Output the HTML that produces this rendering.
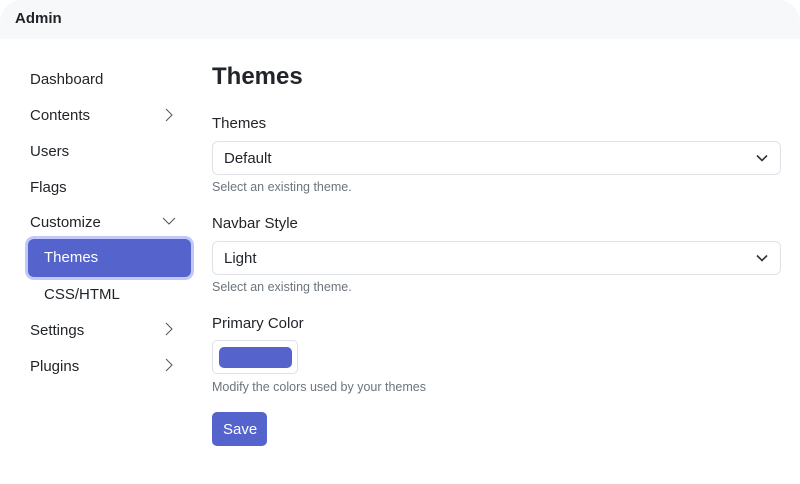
<!DOCTYPE html>
<html><head><style>
*{box-sizing:border-box;margin:0;padding:0}
body{width:800px;height:484px;background:#fff;font-family:"Liberation Sans",sans-serif;color:#212529;position:relative;overflow:hidden}
.hdr{position:absolute;left:0;top:0;width:800px;height:39px;background:#f7f8fa;border-radius:22px 22px 0 0}
.hdr span{position:absolute;left:15px;top:10px;font-weight:bold;font-size:15px}
.nav{position:absolute;left:30px;font-size:15px}
.chev{position:absolute;left:162px}
.act{position:absolute;left:28px;top:239px;width:163px;height:38px;background:#5464cc;border-radius:6px;box-shadow:0 0 0 3px #c2c8fa;color:#fff;font-size:15px;padding:10px 0 0 16px}
.abs{position:absolute}
.lbl{position:absolute;left:212px;font-size:15px}
.sel{position:absolute;left:212px;width:569px;height:34px;border:1px solid #dee2e6;border-radius:6px;font-size:15px;padding:8px 0 0 11px}
.sel svg{position:absolute;right:12px;top:12px}
.help{position:absolute;left:212px;font-size:12.5px;color:#6c757d}
</style></head><body>
<div class="hdr"><span>Admin</span></div>
<div class="nav" style="top:71px">Dashboard</div>
<div class="nav" style="top:107px">Contents</div>
<svg class="chev abs" style="top:108px" width="12" height="14" viewBox="0 0 12 14"><path d="M4 1l6 6-6 6" fill="none" stroke="#555" stroke-width="1"/></svg>
<div class="nav" style="top:143px">Users</div>
<div class="nav" style="top:179px">Flags</div>
<div class="nav" style="top:214px">Customize</div>
<svg class="chev abs" style="top:216px" width="14" height="10" viewBox="0 0 14 10"><path d="M1 2l6 6 6-6" fill="none" stroke="#555" stroke-width="1"/></svg>
<div class="act">Themes</div>
<div class="nav" style="top:286px;left:44px">CSS/HTML</div>
<div class="nav" style="top:322px">Settings</div>
<svg class="chev abs" style="top:322px" width="12" height="14" viewBox="0 0 12 14"><path d="M4 1l6 6-6 6" fill="none" stroke="#555" stroke-width="1"/></svg>
<div class="nav" style="top:358px">Plugins</div>
<svg class="chev abs" style="top:358px" width="12" height="14" viewBox="0 0 12 14"><path d="M4 1l6 6-6 6" fill="none" stroke="#555" stroke-width="1"/></svg>

<div class="abs" style="left:212px;top:63px;font-size:24px;font-weight:bold">Themes</div>
<div class="lbl" style="top:115px">Themes</div>
<div class="sel" style="top:141px">Default<svg width="12" height="8" viewBox="0 0 12 8"><path d="M1 1.5l5 5 5-5" fill="none" stroke="#333" stroke-width="1.6"/></svg></div>
<div class="help" style="top:180px">Select an existing theme.</div>
<div class="lbl" style="top:215px">Navbar Style</div>
<div class="sel" style="top:241px">Light<svg width="12" height="8" viewBox="0 0 12 8"><path d="M1 1.5l5 5 5-5" fill="none" stroke="#333" stroke-width="1.6"/></svg></div>
<div class="help" style="top:280px">Select an existing theme.</div>
<div class="lbl" style="top:315px">Primary Color</div>
<div class="abs" style="left:212px;top:340px;width:86px;height:34px;border:1px solid #dee2e6;border-radius:5px"><div style="position:absolute;left:6px;top:6px;width:73px;height:21px;background:#5464cc;border-radius:5px"></div></div>
<div class="help" style="top:380px">Modify the colors used by your themes</div>
<div class="abs" style="left:212px;top:412px;width:55px;height:34px;background:#5464cc;border-radius:5px;color:#fff;font-size:15px;padding:9px 0 0 11px">Save</div>
</body></html>
